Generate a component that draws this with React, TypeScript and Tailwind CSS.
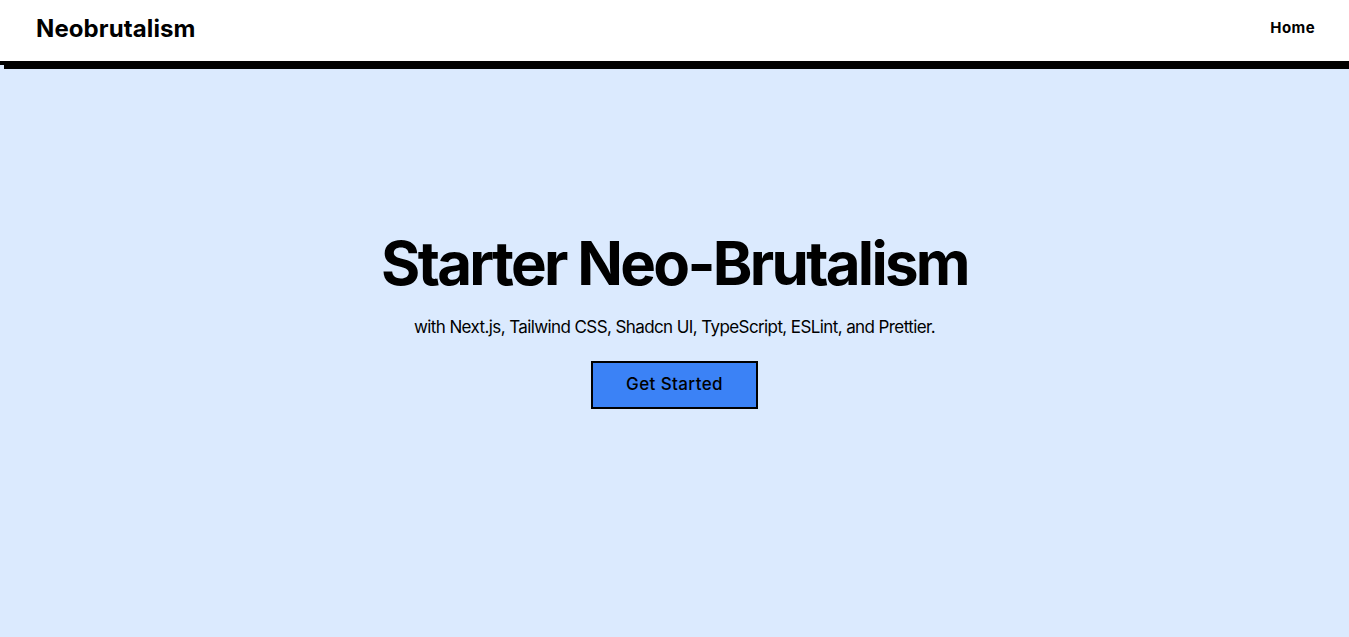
export default function App() {
  return (
    <div className="min-h-screen w-full bg-[#dbeafe] font-['Inter',sans-serif] text-black">
      <nav className="h-[65px] w-full bg-white border-b-4 border-black shadow-[4px_4px_0_0_#000] flex items-center justify-between pl-9 pr-[34px] pb-1">
        <span className="text-[24px] font-bold tracking-[0.1px]">Neobrutalism</span>
        <span className="text-[15px] font-bold tracking-[0.4px]">Home</span>
      </nav>
      <main className="flex flex-col items-center pt-[168px]">
        <h1 className="text-[60px] font-bold tracking-[-2.7px] leading-none">Starter Neo-Brutalism</h1>
        <p className="mt-[22px] text-[17px] tracking-[-0.6px]">
          with Next.js, Tailwind CSS, Shadcn UI, TypeScript, ESLint, and Prettier.
        </p>
        <button className="mt-[20px] w-[167px] h-[48px] bg-[#3b82f6] border-2 border-black text-[17px] font-medium tracking-[0.4px]">
          Get Started
        </button>
      </main>
    </div>
  );
}
